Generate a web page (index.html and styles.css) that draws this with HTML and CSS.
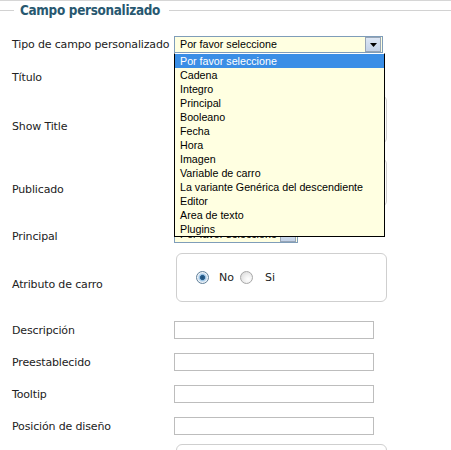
FILE: index.html
```html
<!DOCTYPE html>
<html lang="es">
<head>
<meta charset="utf-8">
<title>Campo personalizado</title>
<link rel="stylesheet" href="styles.css">
</head>
<body>
<div class="panel">
  <div class="legend">
    <span class="rule rule--short"></span>
    <span class="legend-text">Campo personalizado</span>
    <span class="rule rule--long"></span>
  </div>
  <div class="form">
    <div class="row">
      <label class="lbl">Tipo de campo personalizado</label>
      <div class="field">
        <div class="select select--wide">
          <span class="select-text">Por favor seleccione</span>
          <span class="select-btn"><svg width="7" height="4" viewBox="0 0 7 4"><path d="M0 0H7L3.5 4Z" fill="#000"/></svg></span>
        </div>
        <ul class="menu">
          <li class="menu-item is-active">Por favor seleccione</li>
          <li class="menu-item">Cadena</li>
          <li class="menu-item">Integro</li>
          <li class="menu-item">Principal</li>
          <li class="menu-item">Booleano</li>
          <li class="menu-item">Fecha</li>
          <li class="menu-item">Hora</li>
          <li class="menu-item">Imagen</li>
          <li class="menu-item">Variable de carro</li>
          <li class="menu-item">La variante Genérica del descendiente</li>
          <li class="menu-item">Editor</li>
          <li class="menu-item">Area de texto</li>
          <li class="menu-item">Plugins</li>
        </ul>
      </div>
    </div>
    <div class="row row--after-select">
      <label class="lbl">Título</label>
      <input class="text" type="text">
    </div>
    <div class="row row--box row--tight">
      <label class="lbl">Show Title</label>
      <div class="radiobox">
        <input class="radio" type="radio" name="st" checked><span class="opt">No</span>
        <input class="radio radio--second" type="radio" name="st"><span class="opt">Si</span>
      </div>
    </div>
    <div class="row row--box">
      <label class="lbl">Publicado</label>
      <div class="radiobox">
        <input class="radio" type="radio" name="pub" checked><span class="opt">No</span>
        <input class="radio radio--second" type="radio" name="pub"><span class="opt">Si</span>
      </div>
    </div>
    <div class="row row--loose row--principal">
      <label class="lbl lbl--low">Principal</label>
      <div class="select select--narrow">
        <span class="select-text">Por favor seleccione</span>
        <span class="select-btn"><svg width="7" height="4" viewBox="0 0 7 4"><path d="M0 0H7L3.5 4Z" fill="#000"/></svg></span>
      </div>
    </div>
    <div class="row row--box row--tight">
      <label class="lbl">Atributo de carro</label>
      <div class="radiobox">
        <input class="radio" type="radio" name="attr" checked><span class="opt">No</span>
        <input class="radio radio--second" type="radio" name="attr"><span class="opt">Si</span>
      </div>
    </div>
    <div class="row row--loose">
      <label class="lbl">Descripción</label>
      <input class="text" type="text">
    </div>
    <div class="row">
      <label class="lbl">Preestablecido</label>
      <input class="text" type="text">
    </div>
    <div class="row">
      <label class="lbl">Tooltip</label>
      <input class="text" type="text">
    </div>
    <div class="row">
      <label class="lbl">Posición de diseño</label>
      <input class="text" type="text">
    </div>
    <div class="row row--box row--tight">
      <span class="lbl"></span>
      <div class="radiobox"></div>
    </div>
  </div>
</div>
</body>
</html>
```

FILE: styles.css
```css
html, body {
  margin: 0;
  padding: 0;
  background: #fff;
}
body {
  font-family: "DejaVu Sans", Verdana, sans-serif;
  font-size: 11px;
  color: #222;
  overflow: hidden;
}
.panel {
  border-top: 1px solid #d6d6d6;
}
.legend {
  display: flex;
  align-items: center;
  height: 19px;
}
.rule {
  height: 1px;
  background: #d2d2d2;
}
.rule--short {
  width: 14px;
}
.rule--long {
  flex: 1;
}
.legend-text {
  margin: 0 9px 0 6px;
  font-family: "DejaVu Sans Condensed", "DejaVu Sans", sans-serif;
  font-weight: bold;
  font-size: 13.4px;
  letter-spacing: -0.3px;
  color: #285870;
}
.form {
  padding-top: 16px;
  display: flex;
  flex-direction: column;
}
.row {
  display: grid;
  grid-template-columns: 174px 1fr;
  align-items: center;
  margin-top: 14px;
}
.row:first-child {
  margin-top: 0;
}
.row--after-select {
  margin-top: 15px;
}
.row--tight {
  margin-top: 9px;
}
.row--loose {
  margin-top: 19px;
}
.row--principal + .row {
  margin-top: 10px;
}
.row--box {
  align-items: start;
}
.row--box .lbl {
  padding-top: 25px;
}
.lbl {
  padding-left: 12px;
  white-space: nowrap;
  letter-spacing: -0.15px;
}
.lbl--low {
  padding-top: 3px;
}
.field {
  position: relative;
  height: 17px;
}
.select {
  position: relative;
  box-sizing: border-box;
  height: 17px;
  border: 1px solid #7f9db9;
  background: #ffffe1;
  font-family: "Liberation Sans", Arial, sans-serif;
  font-size: 10.7px;
  line-height: 15px;
  color: #000;
  padding-left: 5px;
}
.select--wide {
  width: 209px;
}
.select--narrow {
  width: 124px;
}
.select-btn {
  position: absolute;
  right: 1px;
  top: 0;
  width: 16px;
  height: 15px;
  box-sizing: border-box;
  border: 1px solid #97a5b6;
  background: linear-gradient(#dde7f5, #c3d2e8);
  display: flex;
  align-items: center;
  justify-content: center;
}
.menu {
  position: absolute;
  top: 17px;
  left: 0;
  width: 211px;
  box-sizing: border-box;
  margin: 0;
  padding: 0;
  list-style: none;
  background: #ffffe1;
  border: 1px solid #000;
  border-top-color: #fff;
  font-family: "Liberation Sans", Arial, sans-serif;
  font-size: 10.7px;
  color: #000;
  z-index: 5;
}
.menu-item {
  height: 14px;
  line-height: 14px;
  padding-left: 5px;
  white-space: nowrap;
}
.menu-item.is-active {
  background: #3a8ee6;
  color: #fff;
}
.text {
  box-sizing: border-box;
  width: 200px;
  height: 18px;
  margin: 0;
  border: 1px solid #bdbdbd;
  background: #fff;
  padding: 0 3px;
}
.radiobox {
  box-sizing: border-box;
  width: 211px;
  height: 49px;
  margin-left: 2px;
  border: 1px solid #cfcfcf;
  border-radius: 6px;
  display: flex;
  align-items: center;
  padding-left: 19px;
  background: #fff;
}
.radio {
  appearance: none;
  -webkit-appearance: none;
  width: 13px;
  height: 13px;
  margin: 0 10px 0 0;
  border-radius: 50%;
  box-sizing: border-box;
  border: 1px solid #a7a7a7;
  background: radial-gradient(circle at 65% 65%, #ffffff 0, #f0f0f0 40%, #d4d4d4 100%);
}
.radio:checked {
  border-color: #5f7f99;
  background: radial-gradient(circle, #1f4f7a 0, #2a5f8c 2.2px, #8fbbe0 2.8px, #c9def0 4px, #eef3f8 5px);
}
.radio--second {
  margin-left: 6px;
  margin-right: 12px;
}
.opt {
  line-height: 13px;
}
```
